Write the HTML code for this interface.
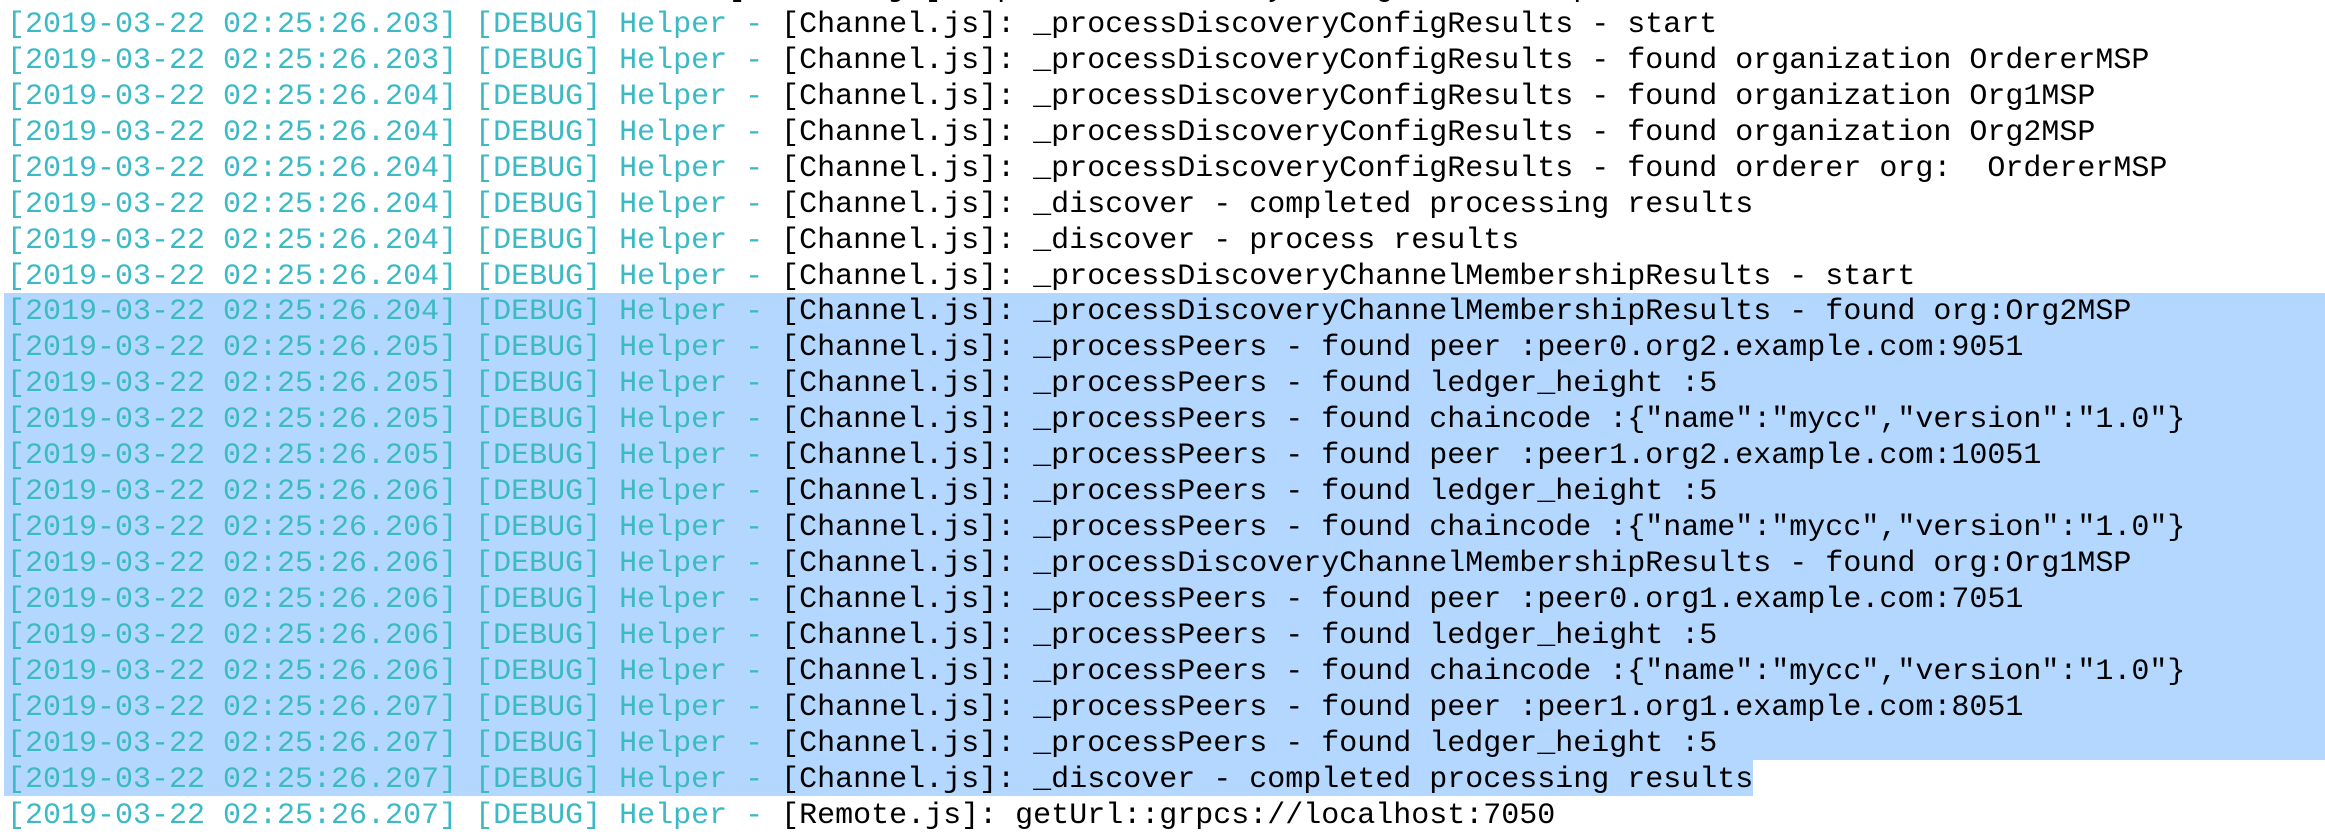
<!DOCTYPE html>
<html><head><meta charset="utf-8"><style>
html,body{margin:0;padding:0;background:#fff;width:2325px;height:836px;overflow:hidden;position:relative}
.hl{position:absolute;background:#b3d7ff}
.l{position:absolute;left:7px;font-family:"Liberation Mono",monospace;font-size:30px;line-height:36px;white-space:pre;color:#000}
.t{color:#3bbac6}
</style></head><body>
<div class="hl" style="left:4px;top:293px;width:2321px;height:467px"></div>
<div class="hl" style="left:4px;top:760px;width:1749px;height:36px"></div>
<div id="c"></div>
<script>
const p="[2019-03-22 02:25:26.";
const L=[
["203","[Channel.js]: _processDiscoveryConfigResults - start"],
["203","[Channel.js]: _processDiscoveryConfigResults - found organization OrdererMSP"],
["204","[Channel.js]: _processDiscoveryConfigResults - found organization Org1MSP"],
["204","[Channel.js]: _processDiscoveryConfigResults - found organization Org2MSP"],
["204","[Channel.js]: _processDiscoveryConfigResults - found orderer org:  OrdererMSP"],
["204","[Channel.js]: _discover - completed processing results"],
["204","[Channel.js]: _discover - process results"],
["204","[Channel.js]: _processDiscoveryChannelMembershipResults - start"],
["204","[Channel.js]: _processDiscoveryChannelMembershipResults - found org:Org2MSP"],
["205","[Channel.js]: _processPeers - found peer :peer0.org2.example.com:9051"],
["205","[Channel.js]: _processPeers - found ledger_height :5"],
["205","[Channel.js]: _processPeers - found chaincode :{\"name\":\"mycc\",\"version\":\"1.0\"}"],
["205","[Channel.js]: _processPeers - found peer :peer1.org2.example.com:10051"],
["206","[Channel.js]: _processPeers - found ledger_height :5"],
["206","[Channel.js]: _processPeers - found chaincode :{\"name\":\"mycc\",\"version\":\"1.0\"}"],
["206","[Channel.js]: _processDiscoveryChannelMembershipResults - found org:Org1MSP"],
["206","[Channel.js]: _processPeers - found peer :peer0.org1.example.com:7051"],
["206","[Channel.js]: _processPeers - found ledger_height :5"],
["206","[Channel.js]: _processPeers - found chaincode :{\"name\":\"mycc\",\"version\":\"1.0\"}"],
["207","[Channel.js]: _processPeers - found peer :peer1.org1.example.com:8051"],
["207","[Channel.js]: _processPeers - found ledger_height :5"],
["207","[Channel.js]: _discover - completed processing results"],
["207","[Remote.js]: getUrl::grpcs://localhost:7050"]];
let h='<div class="l" style="top:-29px">                                        [Channel.js]: _processDiscoveryConfigResults - process</div>';
const esc=s=>s.replace(/&/g,"&amp;").replace(/</g,"&lt;");
L.forEach((r,i)=>{h+='<div class="l" style="top:'+(7+i*35.93).toFixed(1)+'px"><span class="t">'+p+r[0]+'] [DEBUG] Helper - </span>'+esc(r[1])+'</div>';});
document.getElementById('c').innerHTML=h;
</script>
</body></html>
